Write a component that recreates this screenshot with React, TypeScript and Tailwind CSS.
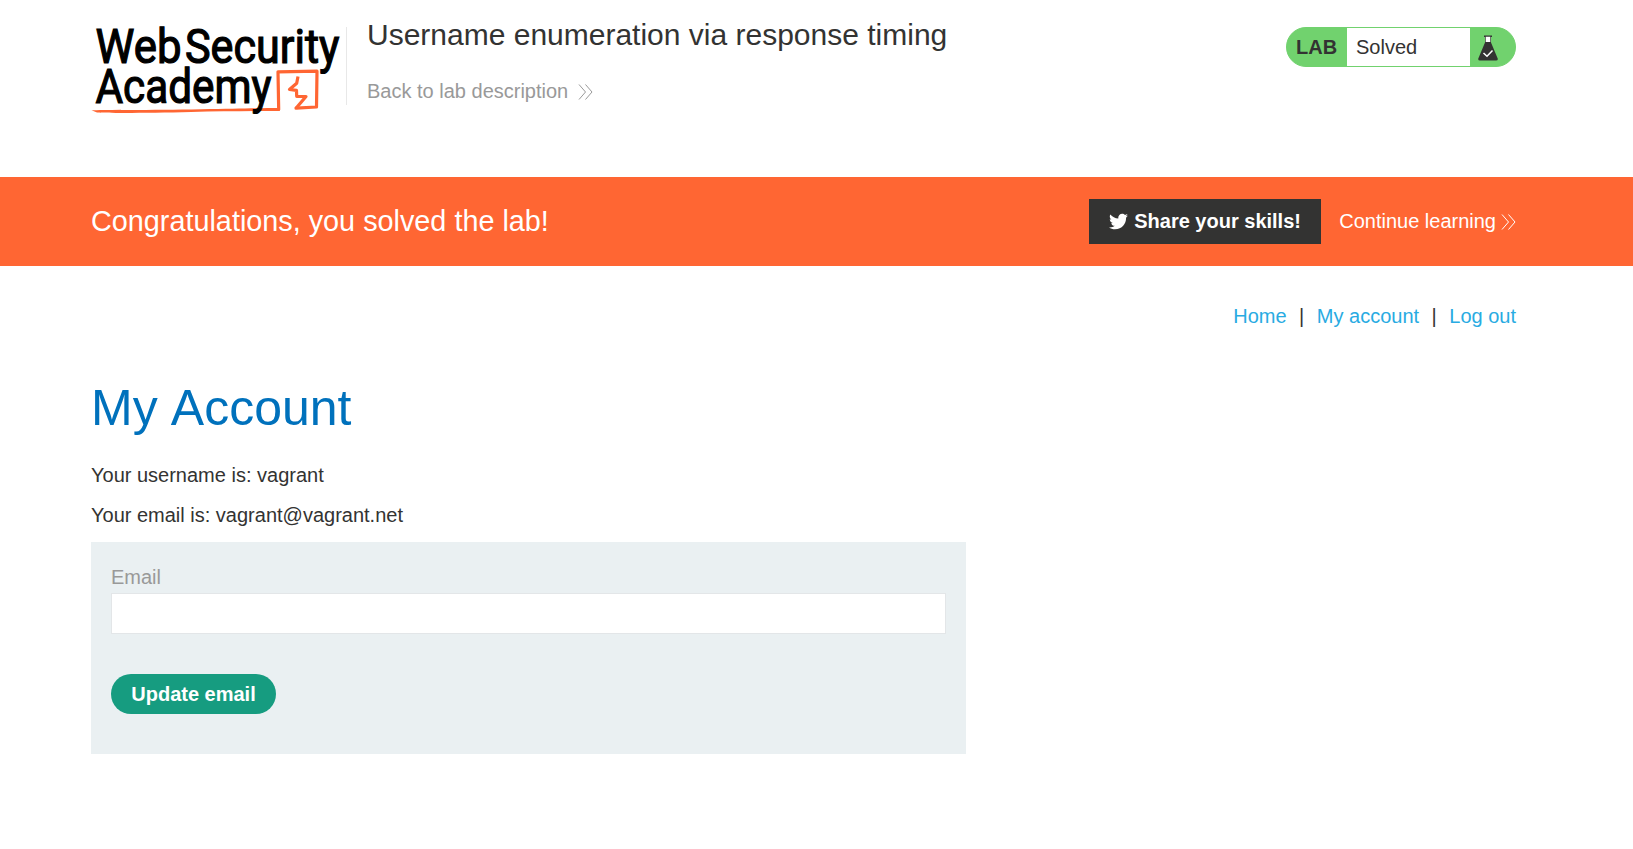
import { FaTwitter } from "react-icons/fa";

function Chevrons({ className }: { className: string }) {
  return (
    <svg viewBox="0 0 15 16" preserveAspectRatio="none" className={className} fill="none" stroke="currentColor" strokeWidth="1">
      <path d="M1 0.5L7.5 8L1 15.5M7.5 0.5L14 8L7.5 15.5" />
    </svg>
  );
}

function Logo() {
  return (
    <svg width="255" height="105" viewBox="0 0 255 105" className="block shrink-0 overflow-visible" aria-label="Web Security Academy">
      <path d="M0.500 96.300C8 95.700 60 96.200 110 95.200C150 94.600 170 94 188.500 94V97C160 97 130 97.300 100 98C60 99 20 99.200 6 98.500Z" fill="#ff6633" />
      <path d="M187.700 95.500L187 57.800L226 57.200L225.500 93L205 94.200" fill="none" stroke="#ff6633" strokeWidth="3.200" strokeLinejoin="round" strokeLinecap="round" />
      <path d="M207 62.500L205.700 69.300L198.500 75.500L205.500 76.300L205.700 82.300L215 82.500L205 94.200" fill="none" stroke="#ff6633" strokeWidth="3.200" strokeLinejoin="round" />
      <g fill="#000" stroke="#000" strokeWidth="1.200" fontFamily="Roboto, sans-serif" fontSize="47.500">
        <text x="4.500" y="48.700" textLength="86" lengthAdjust="spacingAndGlyphs">Web</text>
        <text x="94" y="48.700" textLength="154.500" lengthAdjust="spacingAndGlyphs">Security</text>
        <text x="4.500" y="89" textLength="176" lengthAdjust="spacingAndGlyphs">Academy</text>
      </g>
    </svg>
  );
}

function Flask() {
  return (
    <svg width="20" height="26" viewBox="0 0 20 26" className="mt-px">
      <path d="M6 0.500H14V2H13V7.500L19.700 23.500Q20.200 25.500 18 25.500H2Q-0.200 25.500 0.300 23.500L7 7.500V2H6Z" fill="#333332" />
      <path d="M7.700 1.700H12.300V7H7.700Z" fill="#fff" />
      <path d="M5.500 18L9 21.200L14.500 15.500" stroke="#fff" strokeWidth="1.500" fill="none" />
    </svg>
  );
}

export default function App() {
  return (
    <div className="min-h-[849px] bg-white font-['Liberation_Sans',Arial,sans-serif] text-[20px] leading-[23px] text-[#333332]">
      <header className="flex h-[177px] items-start pr-[117px] pl-[91px]">
        <div className="flex h-full w-[255px] pt-[14px]">
          <Logo />
        </div>
        <div className="mt-[27px] h-[78px] w-px bg-[#e8e8e8]" />
        <div className="flex flex-col pt-[18px] pl-5">
          <h2 className="text-[30px] leading-[34px]">Username enumeration via response timing</h2>
          <a className="mt-[28px] flex items-center gap-[10px] text-[#999]">
            Back to lab description
            <Chevrons className="h-4 w-[15px]" />
          </a>
        </div>
        <div className="mt-[27px] ml-auto flex h-10 w-[230px] items-stretch overflow-hidden rounded-[20px] border border-[#71d26e] bg-[#71d26e]">
          <span className="flex w-[60px] items-center pl-[9px] font-bold">LAB</span>
          <span className="flex w-[123px] items-center bg-white pl-[9px]">Solved</span>
          <span className="flex items-center pl-2">
            <Flask />
          </span>
        </div>
      </header>

      <section className="flex h-[89px] items-center bg-[#ff6633] pr-[117px] pl-[91px] text-white">
        <h4 className="grow pb-px text-[28.8px] leading-[34px]">Congratulations, you solved the lab!</h4>
        <button className="flex h-[45px] w-[232px] items-center gap-[6px] bg-[#333332] pl-5 font-bold">
          <FaTwitter className="size-[19px]" />
          Share your skills!
        </button>
        <a className="ml-[18px] flex items-center gap-[5px]">
          Continue learning
          <Chevrons className="h-4 w-[15px]" />
        </a>
      </section>

      <main className="pr-[117px] pl-[91px]">
        <nav className="flex justify-end gap-[12.500px] pt-[39px] text-[#29abe2]">
          <a>Home</a>
          <span className="text-[#333332]">|</span>
          <a>My account</a>
          <span className="text-[#333332]">|</span>
          <a>Log out</a>
        </nav>
        <h1 className="mt-[51px] text-[50px] leading-[58px] [word-spacing:2px] text-[#0071bc]">My Account</h1>
        <p className="mt-[27px]">Your username is: vagrant</p>
        <p className="mt-[17px]">Your email is: vagrant@vagrant.net</p>
        <form className="mt-[15px] flex h-[212px] w-[875px] flex-col items-start bg-[#eaf0f2] px-5 pt-6">
          <label className="text-[#999]">Email</label>
          <input className="mt-1 h-[41px] w-full border border-[#e3e6e8] bg-white px-2 outline-none" />
          <button type="button" className="mt-10 h-10 w-[165px] rounded-full bg-[#169c80] px-5 font-bold text-white">
            Update email
          </button>
        </form>
      </main>
    </div>
  );
}
